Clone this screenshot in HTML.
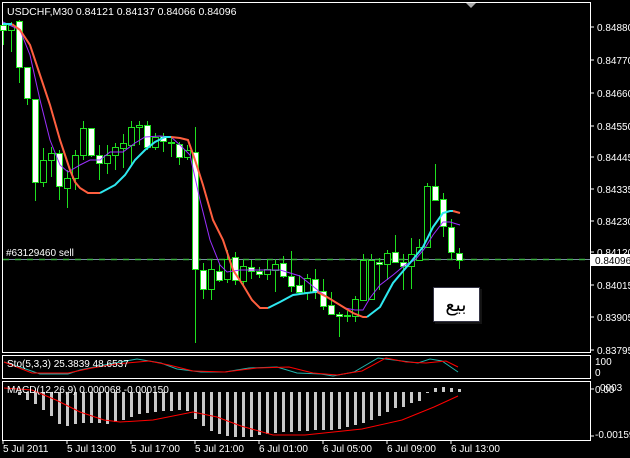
<!DOCTYPE html>
<html><head><meta charset="utf-8"><style>
html,body{margin:0;padding:0;background:#000;width:630px;height:458px;overflow:hidden}
svg{display:block}
text{font-family:"Liberation Sans","DejaVu Sans",sans-serif;font-size:10px;fill:#fff}
</style></head><body>
<svg id="s" width="630" height="458" viewBox="0 0 630 458" xmlns="http://www.w3.org/2000/svg">
<rect width="630" height="458" fill="#000"/>
<g fill="none" stroke="#fff" stroke-width="1">
<path d="M2.5 2.5H590.5V352.5H2.5Z"/>
<path d="M2.5 355.5H590.5V378.5H2.5Z"/>
<path d="M2.5 381.5H590.5V440.5H2.5Z"/>
</g>
<polygon points="466,3 476,3 471,8" fill="#aaa"/>
<line x1="3" y1="259.5" x2="590" y2="259.5" stroke="#7890a0" stroke-width="1"/>
<line x1="3" y1="259.5" x2="590" y2="259.5" stroke="#3cb043" stroke-width="1.5" stroke-dasharray="6,6"/>
<text x="6" y="256">#63129460 sell</text>
<g id="cand"></g>
<polyline fill="none" stroke="#9b30ff" stroke-width="1" points="3,22 20,30 30,55 40,100 50,140 60,165 68,172 80,165 90,160 100,160 110,152 123,152 135,143 145,137 160,136 171,137 180,145 190,155 200,200 210,240 220,265 227,272 240,270 260,270 280,270 300,276 320,292 335,302 345,308 355,310 363,310 370,298 380,285 393,275 405,265 415,260 425,248 433,235 443,222 450,222 460,225"/>
<polyline fill="none" stroke="#ff5f3f" stroke-width="2" points="12,24 20,30 30,45 40,75 50,105 60,140 70,170 75,182 80,188 88,193 100,193"/>
<polyline fill="none" stroke="#2ee8f0" stroke-width="2" points="3,24 12,24"/>
<polyline fill="none" stroke="#2ee8f0" stroke-width="2" points="100,193 115,185 125,175 135,160 145,150 155,142 165,137 171,137"/>
<polyline fill="none" stroke="#ff5f3f" stroke-width="2" points="171,137 180,138 188,140 195,160 203,185 213,220 223,240 233,270 243,285 252,300 260,308 268,308"/>
<polyline fill="none" stroke="#2ee8f0" stroke-width="2" points="268,308 280,302 293,295 307,293 315,292 317,292"/>
<polyline fill="none" stroke="#ff5f3f" stroke-width="2" points="317,292 327,297 340,305 353,313 363,317 367,317"/>
<polyline fill="none" stroke="#2ee8f0" stroke-width="2" points="367,317 380,307 393,283 410,263 423,247 433,227 443,213 450,211 453,211"/>
<polyline fill="none" stroke="#ff5f3f" stroke-width="2" points="453,211 460,213"/>
<text x="7" y="15" style="font-size:10.5px">USDCHF,M30  0.84121 0.84137 0.84066 0.84096</text>
<rect x="435" y="289" width="47" height="35" fill="#222" opacity="0.6"/>
<rect x="433.5" y="287.5" width="46" height="34" fill="#fff" stroke="#334" stroke-width="1"/>
<text x="456" y="311" text-anchor="middle" style="font-size:19px;fill:#000;font-family:'DejaVu Sans',sans-serif">بيع</text>
<g stroke="#fff">
<path d="M590 27h4M590 60h4M590 93h4M590 126h4M590 157h4M590 189h4M590 221h4M590 252h4M590 285h4M590 317h4M590 350h4M590 389h4M590 436h4"/>
<path d="M3 440v4M67 440v4M131 440v4M195 440v4M259 440v4M323 440v4M387 440v4M451 440v4"/>
</g>
<g>
<text x="597" y="31">0.84880</text><text x="597" y="64">0.84770</text><text x="597" y="97">0.84660</text>
<text x="597" y="130">0.84550</text><text x="597" y="161">0.84445</text><text x="597" y="193">0.84335</text>
<text x="597" y="225">0.84230</text><text x="597" y="256">0.84120</text><text x="597" y="289">0.84015</text>
<text x="597" y="321">0.83905</text><text x="597" y="354">0.83795</text>
<text x="595" y="365">100</text><text x="595" y="376">0</text>
<text x="595" y="393">0.00</text><text x="600" y="391">0003</text><text x="595" y="438">-0.00159</text>
</g>
<rect x="591" y="254" width="39" height="12" fill="#fff"/>
<text x="595" y="264" style="fill:#000">0.84096</text>
<polyline fill="none" stroke="#20b2aa" stroke-width="1" points="4,362 20,367 40,374 68,374 80,370 104,365 137,359 161,363 177,369 201,372 225,372 249,368 277,367 297,373 321,374 333,376 354,372 378,358 394,360 418,363 430,359 442,361 458,372"/>
<polyline fill="none" stroke="#f00" stroke-width="1" points="4,362 32,373 68,373 92,368 116,364 149,361 169,365 193,371 225,372 257,368 289,367 313,373 337,375 362,371 386,358 406,362 426,363 446,361 458,367"/>
<text x="7" y="367">Sto(5,3,3) 25.3839 48.6537</text>
<g id="macd"></g>
<polyline fill="none" stroke="#f00" stroke-width="1" points="4,388 32,390 56,400 80,412 104,420 120,422 153,420 193,412 217,417 241,426 273,435 305,435 362,429 402,420 434,407 458,396"/>
<text x="7" y="393">MACD(12,26,9) 0.000068 -0.000150</text>
<g>
<text x="3" y="452">5 Jul 2011</text><text x="67" y="452">5 Jul 13:00</text><text x="131" y="452">5 Jul 17:00</text>
<text x="195" y="452">5 Jul 21:00</text><text x="259" y="452">6 Jul 01:00</text><text x="323" y="452">6 Jul 05:00</text>
<text x="387" y="452">6 Jul 09:00</text><text x="451" y="452">6 Jul 13:00</text>
</g>
</svg>
<script>
var C=[[22,25,30,45,1],[22,25,30,52,0],[20,21,67,83,1],[67,67,98,105,1],[99,99,182,201,1],[148,160,182,187,0],[147,153,160,177,0],[150,153,186,200,1],[170,178,188,208,0],[150,155,178,190,0],[121,128,155,160,0],[128,128,155,157,1],[145,155,163,180,1],[145,155,163,174,0],[143,147,155,170,0],[134,143,148,168,0],[121,127,145,165,0],[121,125,127,145,0],[121,125,147,150,1],[133,137,147,150,0],[133,136,141,152,1],[136,142,143,157,0],[142,144,157,165,1],[145,150,157,160,0],[127,152,269,343,1],[263,270,289,299,1],[260,269,289,300,0],[263,271,280,282,1],[250,259,279,283,0],[252,257,280,285,1],[260,266,281,285,0],[260,267,271,279,1],[267,271,274,278,1],[259,269,274,280,0],[259,264,270,292,0],[256,263,276,278,1],[251,276,286,292,1],[275,285,292,294,1],[274,278,292,300,0],[269,279,292,299,1],[279,291,306,310,1],[292,305,314,314,1],[312,314,316,337,1],[311,315,316,322,0],[296,299,316,322,0],[254,260,300,300,0],[254,260,299,299,0],[258,262,264,290,1],[250,253,264,280,0],[235,252,262,263,1],[254,262,266,290,1],[238,254,266,289,0],[239,247,260,260,0],[183,186,247,247,0],[164,186,200,200,1],[193,199,226,237,1],[219,227,252,260,1],[248,253,260,269,1]];
var g=document.getElementById('cand'),h='';
C.forEach(function(c,i){var x=3+8*i;
h+='<line x1="'+(x+.5)+'" y1="'+c[0]+'" x2="'+(x+.5)+'" y2="'+c[3]+'" stroke="#1fe01f"/>';
var hh=Math.max(1,c[2]-c[1]);
h+='<rect x="'+(x-2.5)+'" y="'+(c[1]+.5)+'" width="6" height="'+hh+'" fill="'+(c[4]?'#fff':'#000')+'" stroke="#1fe01f"/>';});
g.innerHTML=h;
var B=[390,391,395,400,404,410,416,424,426,424,423,423,423,424,422,420,417,414,413,412,411,411,410,411,419,426,431,434,436,437,437,437,435,434,433,432,432,431,431,430,430,430,429,427,425,423,420,416,412,408,407,403,401,393];
var m='';B.forEach(function(b,i){var x=3+8*i;m+='<rect x="'+(x-1)+'" y="392" width="3" height="'+(b-392)+'" fill="#c8c8c8"/>';});
[[435,388],[443,387],[451,388],[459,389]].forEach(function(p){m+='<rect x="'+(p[0]-1)+'" y="'+p[1]+'" width="3" height="'+(392-p[1])+'" fill="#c8c8c8"/>';});
document.getElementById('macd').innerHTML=m;
</script>
</body></html>
